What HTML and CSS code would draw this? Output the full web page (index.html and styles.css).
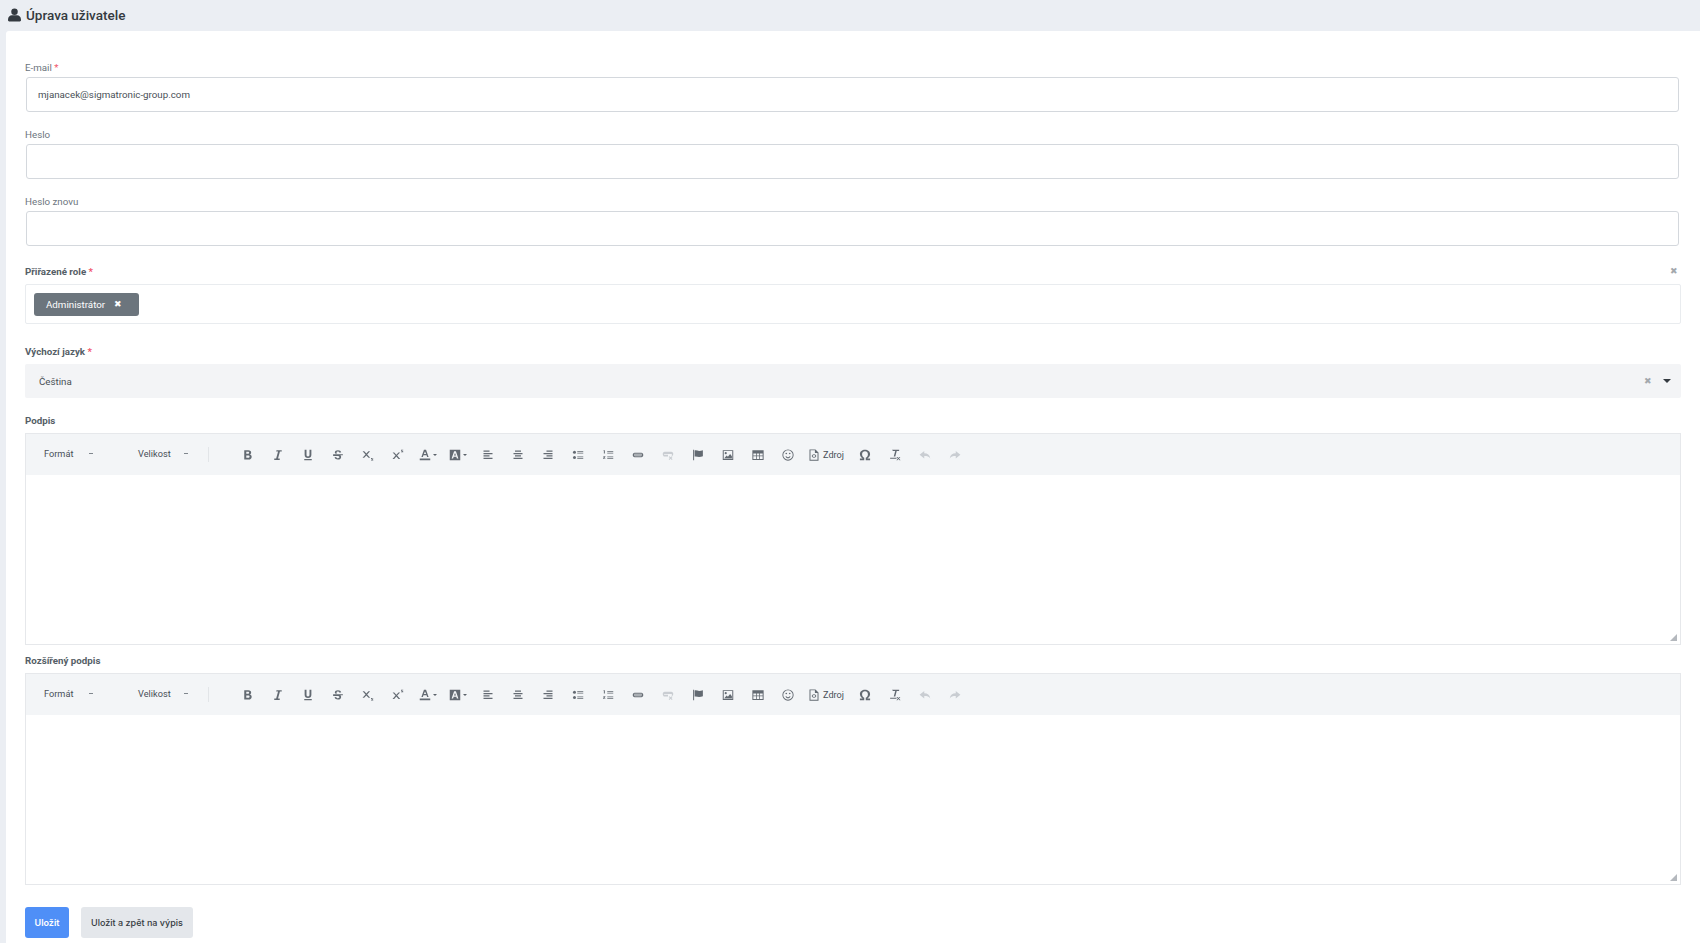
FILE: index.html
```html
<!DOCTYPE html>
<html>

<head>
    <meta name="viewport" content="width=device-width, initial-scale=1">
    <title>
        Úprava uživatele
    </title>
    <link rel="stylesheet" href="styles.css">
</head>

<body>
    <svg class="defs" width="0" height="0">
        <symbol id="i-bold" viewBox="0 0 16 16"><path d="M3 1.500h5.500c2.400 0 3.700 1.200 3.700 3.100 0 1.200-.6 2.100-1.600 2.600 1.400.4 2.300 1.500 2.300 3 0 2.200-1.500 3.800-4 3.800H3zm2.700 2.200v2.700h2.500c.9 0 1.300-.5 1.300-1.300s-.5-1.400-1.300-1.400zm0 4.800v3.300h2.800c1 0 1.600-.6 1.600-1.700s-.6-1.600-1.600-1.600z"/></symbol>
        <symbol id="i-italic" viewBox="0 0 16 16"><path d="M6 1.500h7v1.700h-2.400L8 12.800h2.300v1.700H3v-1.700h2.500l2.600-9.600H5.600z"/></symbol>
        <symbol id="i-underline" viewBox="0 0 16 16"><path d="M3.500 1h2.500v6.700c0 1.500.7 2.300 2 2.300s2-.8 2-2.300V1h2.500v6.700c0 2.900-1.600 4.300-4.500 4.300s-4.500-1.400-4.500-4.300zM3 13.300h10V15H3z"/></symbol>
        <symbol id="i-strike" viewBox="0 0 16 16"><path d="M8 1.500c2.200 0 3.800.9 4.300 2.800l-2.200.6C9.800 3.900 9.100 3.400 8 3.400c-1.200 0-1.900.5-1.900 1.300 0 .5.200.9.800 1.300H4.200c-.2-.4-.4-.9-.4-1.500 0-2 1.800-3 4.200-3zM1.500 7h13v1.400h-3.300c.6.500 1 1.300 1 2.200 0 2.200-1.800 3.500-4.300 3.500-2.300 0-4-1-4.500-3l2.200-.6c.3 1.100 1.100 1.700 2.300 1.700s2-.6 2-1.400c0-.8-.5-1.200-1.500-1.500l-.5-.1H1.500z"/></symbol>
        <symbol id="i-sub" viewBox="0 0 16 16"><path d="M3 3l2.800 3.100L8.600 3h2.200L6.900 7.300l4 4.400H8.700L5.800 8.500l-2.900 3.200H.7l4-4.400L.8 3zM12 12h3v.8h-1.900l1.900 1.500v.9h-3v-.8h1.900L12 12.900z"/></symbol>
        <symbol id="i-sup" viewBox="0 0 16 16"><path d="M3 4.500l2.800 3.100 2.800-3.100h2.200L6.900 8.800l4 4.400H8.700L5.800 10l-2.900 3.200H.7l4-4.400L.8 4.500zM12 1h3v.8h-1.900L15 3.300v.9h-3v-.8h1.900L12 1.900z"/></symbol>
        <symbol id="i-color" viewBox="0 0 16 16"><path d="M6.600 1h2.800l3.400 9.500h-2l-.7-2.300H5.900l-.7 2.300h-2zM8 3.300L6.500 6.700h3zM1 12.500h14V15H1z"/></symbol>
        <symbol id="i-bg" viewBox="0 0 16 16"><path fill-rule="evenodd" d="M1 1h14v14H1zM6.800 3L3.500 12.500h2l.7-2.200h3.600l.7 2.200h2L9.200 3zM8 5.300l1.300 3.400H6.700z"/></symbol>
        <symbol id="i-left" viewBox="0 0 16 16"><path d="M2 2h8v1.700H2zM2 5.200h12v1.700H2zM2 8.400h8v1.700H2zM2 11.600h12v1.700H2z"/></symbol>
        <symbol id="i-center" viewBox="0 0 16 16"><path d="M4 2h8v1.700H4zM2 5.200h12v1.700H2zM4 8.400h8v1.700H4zM2 11.600h12v1.700H2z"/></symbol>
        <symbol id="i-right" viewBox="0 0 16 16"><path d="M6 2h8v1.700H6zM2 5.200h12v1.700H2zM6 8.400h8v1.700H6zM2 11.600h12v1.700H2z"/></symbol>
        <symbol id="i-ul" viewBox="0 0 16 16"><circle cx="3.300" cy="4.300" r="2"/><circle cx="3.300" cy="11.300" r="2"/><path d="M7 3.100h8v.9H7zM7 5h8v.9H7zM7 10.100h8v.9H7zM7 12h8v.9H7z"/></symbol>
        <symbol id="i-ol" viewBox="0 0 16 16"><path d="M2.500 1.500h1.300V6H2.500V2.700h-.8zM1.500 9.500h3v.9L3 12.200h1.600v.8H1.400v-.9L3 10.300H1.500zM7 3h8v.9H7zM7 5h8v.9H7zM7 10h8v.9H7zM7 12h8v.9H7z"/></symbol>
        <symbol id="i-link" viewBox="0 0 16 16"><path d="M3.500 5h9C14 5 15 6.300 15 8s-1 3-2.500 3h-9C2 11 1 9.700 1 8s1-3 2.500-3zm.2 1.300C2.900 6.300 2.500 7 2.500 7.200h11c0-.2-.4-.9-1.200-.9zM2.500 8.800c0 .2.400.9 1.200.9h8.600c.8 0 1.200-.7 1.200-.9z"/></symbol>
        <symbol id="i-unlink" viewBox="0 0 16 16"><path d="M3.500 3.500h9C14 3.500 15 4.800 15 6.500c0 1.200-.5 2.200-1.400 2.700l-1-1.300c.5-.2.8-.9.9-1.400H2.500c.1.500.5 1.200 1.200 1.200H8V10H3.500C2 10 1 8.200 1 6.500s1-3 2.500-3zM9 10.500l1-1 1.500 1.500L13 9.500l1 1-1.500 1.500 1.500 1.500-1 1-1.500-1.500-1.500 1.500-1-1 1.500-1.500z"/></symbol>
        <symbol id="i-flag" viewBox="0 0 16 16"><path d="M1.500 1h1.300v14H1.500zM3.500 2c2.200-.6 4 .5 6 .5 1.700 0 3.400-.3 5-.9v8c-1.600.6-3.300 1-5 1-2 0-3.800-1.100-6-.5z"/></symbol>
        <symbol id="i-image" viewBox="0 0 16 16"><path fill-rule="evenodd" d="M1 1.500h14v13H1zM2.300 2.800v10.400h11.400V2.800z"/><circle cx="5" cy="5.500" r="1.400"/><path d="M2.800 12.700l3.400-4 1.700 1.600 2.900-3.800 2.400 3.300v2.900z"/></symbol>
        <symbol id="i-table" viewBox="0 0 16 16"><path fill-rule="evenodd" d="M.5 1.500h15v13H.5zM1.800 6v2.500h3.600V6zM6.400 6v2.500h3.200V6zM10.600 6v2.500h3.600V6zM1.800 9.500v3.800h3.600V9.500zM6.400 9.500v3.800h3.200V9.500zM10.600 9.500v3.800h3.600V9.500z"/></symbol>
        <symbol id="i-smiley" viewBox="0 0 16 16"><path fill-rule="evenodd" d="M8 .5a7.500 7.500 0 1 1 0 15A7.500 7.500 0 0 1 8 .5zm0 1.200a6.300 6.300 0 1 0 0 12.600A6.300 6.300 0 0 0 8 1.700z"/><circle cx="5.700" cy="6" r="1.100"/><circle cx="10.300" cy="6" r="1.100"/><path d="M4.600 9.500h1.200c.4.900 1.200 1.400 2.200 1.400s1.800-.5 2.200-1.400h1.200C10.900 11.200 9.700 12.200 8 12.200s-2.900-1-3.400-2.700z"/></symbol>
        <symbol id="i-source" viewBox="0 0 16 16"><path fill-rule="evenodd" d="M2 .5h8l4 4V15.500H2zM3.300 1.800v12.400h9.400V5.300H9.200V1.800z"/><path d="M7 6.500L4.800 9.200 7 11.900l.9-.7-1.600-2 1.600-2zM9 6.500l2.200 2.700L9 11.900l-.9-.7 1.600-2-1.600-2z"/></symbol>
        <symbol id="i-omega" viewBox="0 0 16 16"><path d="M8 1c3.800 0 6.800 2.200 6.800 5.800 0 2.600-1.400 4.400-3.400 5.400v.4h3.400V15H9v-3.300c1.700-.7 2.900-2.300 2.900-4.700 0-2.500-1.600-3.900-3.900-3.900S4.100 4.500 4.100 7c0 2.400 1.200 4 2.900 4.700V15H1.200v-2.400h3.400v-.4c-2-1-3.400-2.800-3.400-5.400C1.200 3.200 4.200 1 8 1z"/></symbol>
        <symbol id="i-clear" viewBox="0 0 16 16"><path d="M4 1h9.500v1.700h-3.200L8.400 10H6.300l2-7.300H5.300zM1.500 11.500h8.500v1.500H1.500zM10 10.500h1.400l1.200 1.500 1.200-1.500h1.400l-1.900 2.200 2.100 2.300H14l-1.400-1.700-1.400 1.700H9.800l2.100-2.300z"/></symbol>
        <symbol id="i-undo" viewBox="0 0 16 16"><path d="M7 2.500v3.300c4.300 0 7.300 2 8 6.700-1.600-2.500-4-3.300-8-3.300v3.300L.8 7.500z"/></symbol>
        <symbol id="i-redo" viewBox="0 0 16 16"><path d="M9 2.500v3.300c-4.300 0-7.300 2-8 6.700 1.600-2.500 4-3.300 8-3.300v3.300l6.200-5z"/></symbol>
    </svg>

    <header class="page-head">
        <svg class="head-icon" viewBox="0 0 14 14"><circle cx="7" cy="3.500" r="3.500"/><path d="M0 12c0-3 2-4.700 4.200-4.700h5.600C12 7.300 14 9 14 12v.7c0 .7-.6 1.300-1.300 1.300H1.300C.6 14 0 13.400 0 12.700z"/></svg>
        <h1>Úprava uživatele</h1>
    </header>

    <main class="card">
        <form class="user-form">
            <div class="field field-first">
                <label class="lbl">E-mail <span class="req">*</span></label>
                <div class="input">mjanacek@sigmatronic-group.com</div>
            </div>
            <div class="field">
                <label class="lbl">Heslo</label>
                <div class="input"></div>
            </div>
            <div class="field">
                <label class="lbl">Heslo znovu</label>
                <div class="input"></div>
            </div>

            <div class="field field-role">
                <div class="lbl-row">
                    <label class="lbl lbl-strong">Přiřazené role <span class="req">*</span></label>
                    <span class="clear-x clear-role">✖</span>
                </div>
                <div class="multi">
                    <span class="tag">Administrátor <span class="tag-x">✖</span></span>
                </div>
            </div>

            <div class="field field-lang">
                <label class="lbl lbl-strong">Výchozí jazyk <span class="req">*</span></label>
                <div class="select">
                    <span class="select-val">Čeština</span>
                    <span class="clear-x">✖</span>
                    <span class="select-caret"></span>
                </div>
            </div>

            <div class="field field-editor">
                <label class="lbl lbl-strong">Podpis</label>
                <div class="editor">
                    <div class="toolbar">
                        <span class="combo combo-format">Formát<span class="combo-caret"></span></span>
                        <span class="combo combo-size">Velikost<span class="combo-caret"></span></span>
                        <span class="tb-sep"></span>
                        <span class="tb"><svg><use href="#i-bold"/></svg></span>
                        <span class="tb"><svg><use href="#i-italic"/></svg></span>
                        <span class="tb"><svg><use href="#i-underline"/></svg></span>
                        <span class="tb"><svg><use href="#i-strike"/></svg></span>
                        <span class="tb"><svg><use href="#i-sub"/></svg></span>
                        <span class="tb"><svg><use href="#i-sup"/></svg></span>
                        <span class="tb tb-drop"><svg><use href="#i-color"/></svg></span>
                        <span class="tb tb-drop"><svg><use href="#i-bg"/></svg></span>
                        <span class="tb"><svg><use href="#i-left"/></svg></span>
                        <span class="tb"><svg><use href="#i-center"/></svg></span>
                        <span class="tb"><svg><use href="#i-right"/></svg></span>
                        <span class="tb"><svg><use href="#i-ul"/></svg></span>
                        <span class="tb"><svg><use href="#i-ol"/></svg></span>
                        <span class="tb"><svg><use href="#i-link"/></svg></span>
                        <span class="tb tb-off"><svg><use href="#i-unlink"/></svg></span>
                        <span class="tb"><svg><use href="#i-flag"/></svg></span>
                        <span class="tb"><svg><use href="#i-image"/></svg></span>
                        <span class="tb"><svg><use href="#i-table"/></svg></span>
                        <span class="tb"><svg><use href="#i-smiley"/></svg></span>
                        <span class="tb tb-source"><svg><use href="#i-source"/></svg>Zdroj</span>
                        <span class="tb"><svg><use href="#i-omega"/></svg></span>
                        <span class="tb"><svg><use href="#i-clear"/></svg></span>
                        <span class="tb tb-off"><svg><use href="#i-undo"/></svg></span>
                        <span class="tb tb-off"><svg><use href="#i-redo"/></svg></span>
                    </div>
                    <div class="editor-body"><span class="grip"></span></div>
                </div>
            </div>

            <div class="field field-editor">
                <label class="lbl lbl-strong">Rozšířený podpis</label>
                <div class="editor">
                    <div class="toolbar">
                        <span class="combo combo-format">Formát<span class="combo-caret"></span></span>
                        <span class="combo combo-size">Velikost<span class="combo-caret"></span></span>
                        <span class="tb-sep"></span>
                        <span class="tb"><svg><use href="#i-bold"/></svg></span>
                        <span class="tb"><svg><use href="#i-italic"/></svg></span>
                        <span class="tb"><svg><use href="#i-underline"/></svg></span>
                        <span class="tb"><svg><use href="#i-strike"/></svg></span>
                        <span class="tb"><svg><use href="#i-sub"/></svg></span>
                        <span class="tb"><svg><use href="#i-sup"/></svg></span>
                        <span class="tb tb-drop"><svg><use href="#i-color"/></svg></span>
                        <span class="tb tb-drop"><svg><use href="#i-bg"/></svg></span>
                        <span class="tb"><svg><use href="#i-left"/></svg></span>
                        <span class="tb"><svg><use href="#i-center"/></svg></span>
                        <span class="tb"><svg><use href="#i-right"/></svg></span>
                        <span class="tb"><svg><use href="#i-ul"/></svg></span>
                        <span class="tb"><svg><use href="#i-ol"/></svg></span>
                        <span class="tb"><svg><use href="#i-link"/></svg></span>
                        <span class="tb tb-off"><svg><use href="#i-unlink"/></svg></span>
                        <span class="tb"><svg><use href="#i-flag"/></svg></span>
                        <span class="tb"><svg><use href="#i-image"/></svg></span>
                        <span class="tb"><svg><use href="#i-table"/></svg></span>
                        <span class="tb"><svg><use href="#i-smiley"/></svg></span>
                        <span class="tb tb-source"><svg><use href="#i-source"/></svg>Zdroj</span>
                        <span class="tb"><svg><use href="#i-omega"/></svg></span>
                        <span class="tb"><svg><use href="#i-clear"/></svg></span>
                        <span class="tb tb-off"><svg><use href="#i-undo"/></svg></span>
                        <span class="tb tb-off"><svg><use href="#i-redo"/></svg></span>
                    </div>
                    <div class="editor-body"><span class="grip"></span></div>
                </div>
            </div>

            <div class="actions">
                <button type="button" class="btn btn-primary">Uložit</button>
                <button type="button" class="btn btn-light">Uložit a zpět na výpis</button>
            </div>
        </form>
    </main>
</body>

</html>
```

FILE: styles.css
```css
* {
    box-sizing: border-box;
}

html,
body {
    height: 100%;
}

body {
    margin: 0;
    background-color: #ebeef3;
    color: #495057;
    font-family: Roboto, "Liberation Sans", sans-serif;
    font-size: 9.75px;
    overflow: hidden;
}

.defs {
    position: absolute;
}

.page-head {
    display: flex;
    align-items: center;
    height: 30px;
    margin-bottom: 1px;
    padding-left: 8px;
    gap: 5px;
}

.head-icon {
    width: 13px;
    height: 14px;
    fill: #343a40;
}

.page-head h1 {
    margin: 0;
    font-size: 13.5px;
    font-weight: 500;
    color: #343a40;
}

.card {
    margin-left: 6px;
    height: 912px;
    background-color: #fff;
    border-top-left-radius: 3px;
    padding: 0 19px;
}

.lbl {
    display: block;
    height: 13px;
    line-height: 13px;
    color: #6c757d;
}

.lbl-strong {
    font-weight: 700;
    color: #555e66;
}

.req {
    color: #f1556c;
}

.field {
    padding-top: 16px;
}

.field-first {
    padding-top: 30px;
}

.field .lbl {
    margin-bottom: 3px;
}

.field .lbl-strong {
    margin-bottom: 6px;
}

.input {
    height: 35px;
    margin: 0 2px 0 1px;
    padding: 0 11px;
    line-height: 33px;
    border: 1px solid #d4d8dd;
    border-radius: 3px;
    color: #495057;
}

.lbl-row {
    display: flex;
    justify-content: space-between;
    align-items: flex-start;
}

.field-role {
    padding-top: 19px;
}

.clear-x {
    font-size: 9px;
    color: #a3a8ad;
}

.clear-role {
    margin-right: 3px;
    line-height: 13px;
}

.multi {
    display: flex;
    align-items: center;
    height: 40px;
    padding-left: 8px;
    border: 1px solid #e9ecef;
    border-radius: 2px;
}

.tag {
    display: inline-flex;
    align-items: center;
    justify-content: space-between;
    width: 105px;
    height: 23px;
    padding: 0 17px 0 12px;
    background-color: #6c757d;
    border-radius: 3px;
    color: #fff;
}

.tag-x {
    font-size: 9px;
}

.field-lang {
    padding-top: 21px;
}

.select {
    display: flex;
    align-items: center;
    height: 34px;
    padding: 0 10px 0 14px;
    background-color: #f3f4f6;
    border-radius: 2px;
}

.select-val {
    flex: 1;
}

.select-caret {
    width: 0;
    height: 0;
    margin-left: 11px;
    border-left: 4px solid transparent;
    border-right: 4px solid transparent;
    border-top: 4px solid #343a40;
}

.field-editor {
    padding-top: 16px;
}

.field-editor + .field-editor {
    padding-top: 9px;
}

.editor {
    height: 212px;
    border: 1px solid #e6e8eb;
}

.toolbar {
    display: flex;
    align-items: center;
    height: 41px;
    background-color: #f3f5f7;
    color: #495057;
}

.combo {
    display: flex;
    align-items: center;
    height: 100%;
    padding-bottom: 2px;
    font-size: 9.2px;
}

.combo-format {
    width: 93px;
    padding-left: 18px;
}

.combo-size {
    width: 89px;
    padding-left: 19px;
}

.combo-caret {
    width: 4px;
    height: 1.5px;
    background-color: #80878e;
    margin-left: 16px;
}

.combo-size .combo-caret {
    margin-left: 13px;
}

.tb-sep {
    width: 1px;
    height: 15px;
    background-color: #e2e5e8;
    margin-right: 24px;
}

.tb {
    display: flex;
    align-items: center;
    justify-content: center;
    width: 30px;
    height: 100%;
    fill: #636a72;
}

.tb svg {
    width: 12px;
    height: 12px;
}

.tb-drop::after {
    content: "";
    width: 0;
    height: 0;
    margin-left: 2px;
    border-left: 2px solid transparent;
    border-right: 2px solid transparent;
    border-top: 2px solid #5a6169;
}

.tb-off {
    fill: #c9cdd2;
}

.tb-source {
    justify-content: flex-start;
    width: 47px;
    gap: 3px;
    padding-left: 5px;
    font-size: 9.2px;
}

.editor-body {
    position: relative;
    height: 169px;
}

.grip {
    position: absolute;
    right: 3px;
    bottom: 3px;
    width: 0;
    height: 0;
    border-left: 7px solid transparent;
    border-bottom: 7px solid #b4b8bd;
}

.actions {
    display: flex;
    gap: 12px;
    padding-top: 22px;
}

.btn {
    height: 31px;
    border: 0;
    border-radius: 3px;
    font-family: Inter, Roboto, sans-serif;
    font-size: 9px;
    padding: 0;
}

.btn-primary {
    width: 44px;
    background-color: #4f8ff7;
    color: #fff;
    font-weight: 600;
}

.btn-light {
    width: 112px;
    background-color: #e4e7eb;
    color: #343a40;
    font-weight: 500;
}
```
